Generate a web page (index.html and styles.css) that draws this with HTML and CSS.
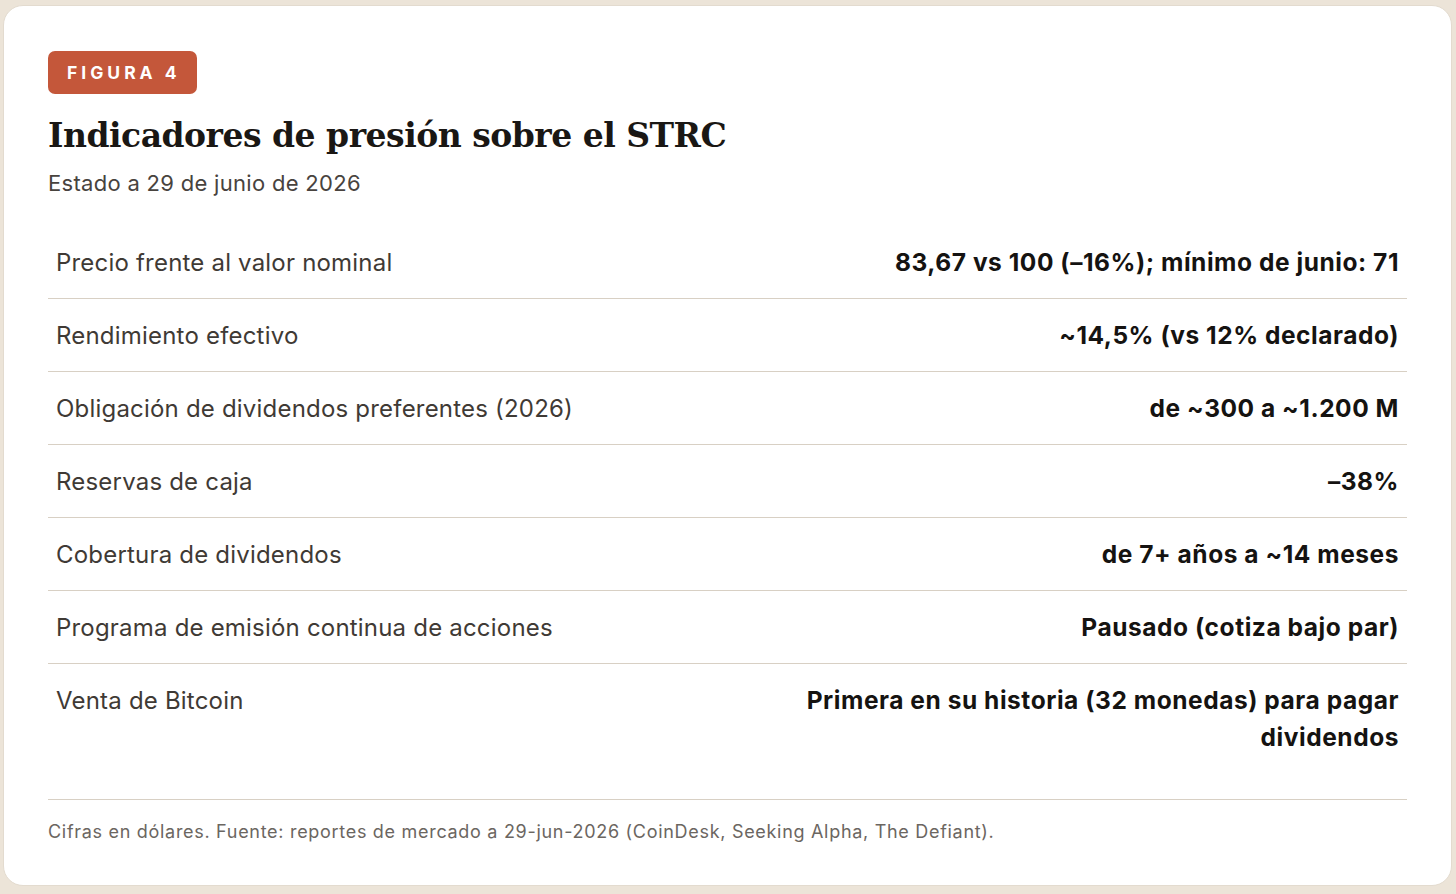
FILE: index.html
```html
<!DOCTYPE html>
<html lang="es">
<head>
<meta charset="utf-8">
<title>Figura 4</title>
<link rel="stylesheet" href="styles.css">
</head>
<body>
<div class="card">
  <div class="badge">FIGURA 4</div>
  <h1 class="title">Indicadores de presión sobre el STRC</h1>
  <p class="subtitle">Estado a 29 de junio de 2026</p>
  <div class="table">
    <div class="row"><div class="label">Precio frente al valor nominal</div><div class="value">83,67 vs 100 (–16%); mínimo de junio: 71</div></div>
    <div class="row"><div class="label">Rendimiento efectivo</div><div class="value">~14,5% (vs 12% declarado)</div></div>
    <div class="row"><div class="label">Obligación de dividendos preferentes (2026)</div><div class="value">de ~300 a ~1.200 M</div></div>
    <div class="row"><div class="label">Reservas de caja</div><div class="value">–38%</div></div>
    <div class="row"><div class="label">Cobertura de dividendos</div><div class="value">de 7+ años a ~14 meses</div></div>
    <div class="row"><div class="label">Programa de emisión continua de acciones</div><div class="value">Pausado (cotiza bajo par)</div></div>
    <div class="row last"><div class="label">Venta de Bitcoin</div><div class="value narrow">Primera en su historia (32 monedas) para pagar dividendos</div></div>
  </div>
  <p class="footer">Cifras en dólares. Fuente: reportes de mercado a 29-jun-2026 (CoinDesk, Seeking Alpha, The Defiant).</p>
</div>
</body>
</html>
```

FILE: styles.css
```css
html, body {
  margin: 0;
  padding: 0;
}
body {
  background: #ece4d8;
  padding: 5px 4px 7px 3px;
  font-family: Inter, "Noto Sans", sans-serif;
}
.card {
  background: #ffffff;
  border: 1px solid #e3dbcf;
  border-radius: 20px;
  padding: 45px 44px 0 44px;
  height: 881px;
  box-sizing: border-box;
}
.badge {
  display: inline-block;
  background: #c4573a;
  color: #ffffff;
  font-weight: 700;
  font-size: 17.5px;
  letter-spacing: 4px;
  line-height: 43px;
  height: 43px;
  padding: 0 16px 0 19px;
  border-radius: 7px;
}
.title {
  font-family: "DejaVu Serif", Georgia, serif;
  font-weight: 700;
  font-size: 33px;
  line-height: 44px;
  color: #1a1714;
  margin: 20px 0 0 0;
  letter-spacing: -0.5px;
}
.subtitle {
  font-size: 22px;
  letter-spacing: 0.3px;
  color: #48433e;
  margin: 9px 0 0 0;
  line-height: 32px;
}
.table {
  margin-top: 27px;
  border-bottom: 1px solid #d8d0c4;
  padding-bottom: 43px;
}
.row {
  display: flex;
  justify-content: space-between;
  align-items: flex-start;
  gap: 40px;
  padding: 18px 8px 17px 8px;
  border-bottom: 1px solid #d8d0c4;
  font-size: 24px;
  line-height: 37px;
}
.row.last {
  border-bottom: none;
  padding-bottom: 0;
}
.label {
  color: #3f3a35;
  letter-spacing: 0.2px;
  white-space: nowrap;
}
.value {
  color: #151311;
  font-size: 24.5px;
  font-weight: 700;
  letter-spacing: 0.55px;
  text-align: right;
}
.value.narrow {
  max-width: 610px;
}
.footer {
  margin: 20px 0 0 0;
  font-size: 18px;
  letter-spacing: 0.7px;
  color: #6b6661;
  line-height: 24px;
}
```
